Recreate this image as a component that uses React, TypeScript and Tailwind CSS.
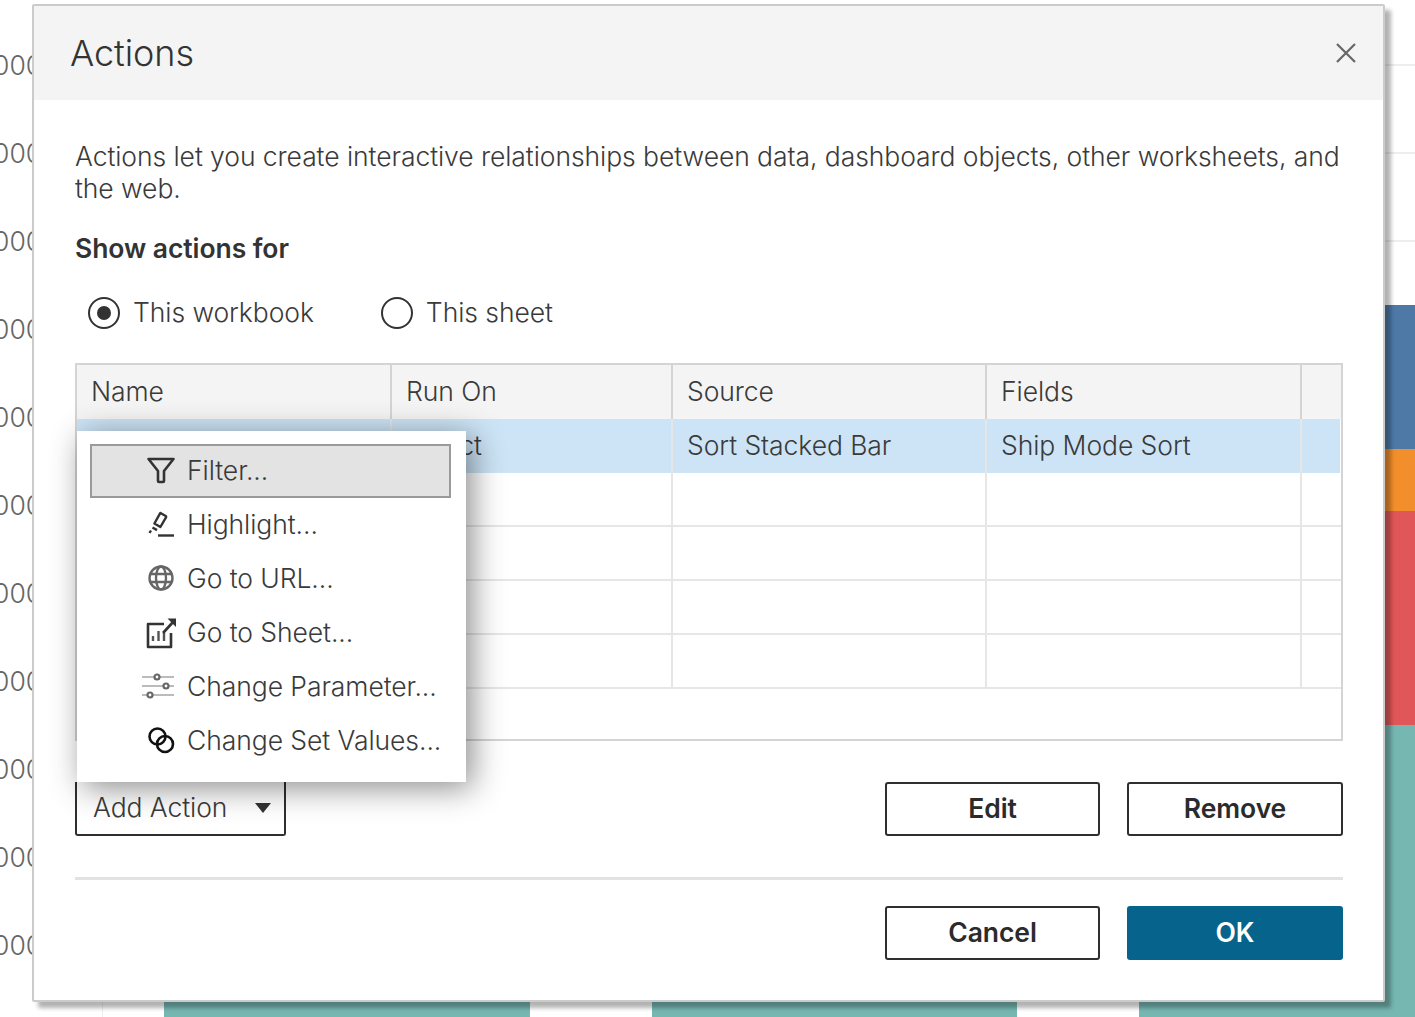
import { ReactNode } from 'react';

const icons: Record<string, ReactNode> = {
  filter: (
    <path d="M3.5 5h25l-9.5 12v10a1 1 0 0 1-1 1h-4a1 1 0 0 1-1-1V17z" fill="none" stroke="#333" strokeWidth="2.6" strokeLinejoin="round" />
  ),
  highlight: (
    <g>
      <path d="M15.5 5l5.2 3a1 1 0 0 1 .3 1.4l-5.6 9.6-6-3.5 5.4-9.7a1 1 0 0 1 .7-.8z" fill="none" stroke="#333" strokeWidth="2.4" strokeLinejoin="round" />
      <path d="M7.5 19.5l4.5 2.6M4.5 25l1.5-2.5" fill="none" stroke="#333" strokeWidth="2.4" />
      <path d="M13 27.5h16" stroke="#333" strokeWidth="2.4" />
    </g>
  ),
  globe: (
    <g fill="none" stroke="#666" strokeWidth="2.4">
      <circle cx="16" cy="16" r="11.5" />
      <ellipse cx="16" cy="16" rx="5" ry="11.5" />
      <path d="M5 12h22M5 20h22" />
    </g>
  ),
  sheet: (
    <g fill="none" stroke="#333">
      <path d="M19 8H3v23h23V17" strokeWidth="2.6" strokeLinejoin="round" />
      <path d="M8 25v-5M13.5 25V15M19 25v-8" stroke="#555" strokeWidth="2.4" />
      <path d="M18 17L29 5" strokeWidth="2.6" />
      <path d="M22.5 2.5h8.5v8.5z" fill="#333" stroke="none" />
    </g>
  ),
  parameter: (
    <g>
      <path d="M-3 7h32M-3 16h32M-3 25h32" stroke="#bbb" strokeWidth="2.2" />
      <g fill="#fff" stroke="#666" strokeWidth="2.2">
        <circle cx="12" cy="7" r="2.5" />
        <circle cx="21" cy="16" r="2.5" />
        <circle cx="5" cy="25" r="2.5" />
      </g>
    </g>
  ),
  sets: (
    <g fill="none" stroke="#111" strokeWidth="2.6">
      <circle cx="12.5" cy="12.5" r="8" />
      <circle cx="20" cy="20" r="8" />
    </g>
  ),
};

const menuItems = [
  { label: 'Filter...', icon: 'filter' },
  { label: 'Highlight...', icon: 'highlight' },
  { label: 'Go to URL...', icon: 'globe' },
  { label: 'Go to Sheet...', icon: 'sheet' },
  { label: 'Change Parameter...', icon: 'parameter' },
  { label: 'Change Set Values...', icon: 'sets' },
];

const emptyRows = [1, 2, 3, 4];
const axisTicks = [1, 2, 3, 4, 5, 6, 7, 8, 9, 10, 11];
const cols = 'grid grid-cols-[315px_281px_314px_315px_1fr]';

function Cell({ children, last }: { children?: ReactNode; last?: boolean }) {
  return (
    <div className={`flex items-center pl-[14px] whitespace-nowrap ${last ? '' : 'border-r-2 border-[#e6e6e6]'}`}>
      {children}
    </div>
  );
}

function OutlineButton({ label }: { label: string }) {
  return (
    <button className="h-[54px] border-2 border-[#2f2f2f] rounded-[3px] bg-white font-semibold text-[#2b2b2b]">
      {label}
    </button>
  );
}

function Radio({ label, checked }: { label: string; checked?: boolean }) {
  return (
    <label className="flex items-center gap-[13px]">
      <span className="w-[32px] h-[32px] rounded-full border-2 border-[#333] flex items-center justify-center">
        {checked && <span className="w-[14px] h-[14px] rounded-full bg-[#333]" />}
      </span>
      <span className="-translate-y-px">{label}</span>
    </label>
  );
}

export default function App() {
  return (
    <div className="relative w-[1415px] h-[1017px] overflow-hidden bg-white font-['Inter',sans-serif] text-[26.5px] tracking-[-0.07px] text-[#3a3a3a]">
      {/* worksheet behind the dialog */}
      <div className="absolute left-[-48px] top-[22px] flex flex-col font-light text-[#666]">
        {axisTicks.map((t) => (
          <div key={t} className="h-[88px] w-[90px] flex items-center justify-end">
            1,000
          </div>
        ))}
      </div>
      <div className="absolute left-[1385px] right-0 top-0 h-[305px] flex flex-col justify-start pt-[64px] gap-[86px]">
        <div className="h-[2px] bg-[#eeeeee]" />
        <div className="h-[2px] bg-[#eeeeee]" />
        <div className="h-[2px] bg-[#eeeeee]" />
      </div>
      <div className="absolute left-[1385px] right-0 top-[305px] bottom-0 flex flex-col">
        <div className="h-[144px] bg-[#4e79a7]" />
        <div className="h-[62px] bg-[#f28e2b]" />
        <div className="h-[214px] bg-[#e15759]" />
        <div className="flex-1 bg-[#76b7b2]" />
      </div>
      <div className="absolute left-[102px] w-px top-[990px] bottom-0 bg-[#eeeeee]" />
      <div className="absolute left-[164px] w-[366px] top-[990px] bottom-0 bg-[#76b7b2]" />
      <div className="absolute left-[652px] w-[365px] top-[990px] bottom-0 bg-[#76b7b2]" />
      <div className="absolute left-[1139px] w-[260px] top-[990px] bottom-0 bg-[#76b7b2]" />

      {/* dialog */}
      <div className="absolute left-[32px] top-[4px] w-[1353px] h-[998px] bg-white border-2 border-[#cbcbcb] rounded-[2px] shadow-[6px_6px_4px_rgba(0,0,0,0.3)] flex flex-col">
        <div className="h-[94px] bg-[#f4f4f4] flex items-center justify-between pl-[36px] pr-[27px]">
          <h1 className="text-[36px] font-light text-[#333]">Actions</h1>
          <svg width="20" height="20" viewBox="0 0 20 20">
            <path d="M1 1l18 18M19 1L1 19" stroke="#666" strokeWidth="2.2" />
          </svg>
        </div>

        <div className="flex-1 flex flex-col pl-[41px] pr-[40px] pt-[40px]">
          <p className="leading-[32px] font-light">
            Actions let you create interactive relationships between data, dashboard objects, other worksheets, and the web.
          </p>
          <h2 className="mt-[24px] leading-[40px] font-semibold text-[#333]">Show actions for</h2>
          <div className="flex gap-[67px] pl-[13px] mt-[29px] font-light leading-[32px]">
            <Radio label="This workbook" checked />
            <Radio label="This sheet" />
          </div>

          <div className="mt-[34px] h-[378px] border-2 border-[#d4d4d4] flex flex-col font-light">
            <div className={`${cols} h-[54px] bg-[#f4f4f4] [&>div]:border-[#d4d4d4]`}>
              <Cell>Name</Cell>
              <Cell>Run On</Cell>
              <Cell>Source</Cell>
              <Cell>Fields</Cell>
              <Cell last />
            </div>
            <div className={`${cols} h-[54px] mr-px bg-[#cce4f6]`}>
              <Cell>Sort</Cell>
              <Cell>Select</Cell>
              <Cell>Sort Stacked Bar</Cell>
              <Cell>Ship Mode Sort</Cell>
              <Cell last />
            </div>
            {emptyRows.map((r) => (
              <div key={r} className={`${cols} h-[54px] border-b-2 border-[#e6e6e6]`}>
                <Cell />
                <Cell />
                <Cell />
                <Cell />
                <Cell last />
              </div>
            ))}
          </div>

          <div className="mt-[41px] flex justify-between">
            <div className="h-[54px] w-[211px] border-2 border-t-0 border-[#2f2f2f] rounded-b-[3px] flex items-center justify-between pl-[16px] pr-[13px] font-light">
              Add Action
              <svg width="16" height="10" viewBox="0 0 16 10">
                <path d="M0 0h16L8 10z" fill="#333" />
              </svg>
            </div>
            <div className="grid grid-cols-[215px_216px] gap-[27px]">
              <OutlineButton label="Edit" />
              <OutlineButton label="Remove" />
            </div>
          </div>

          <div className="mt-[41px] h-[3px] bg-[#e2e2e2]" />

          <div className="mt-[26px] self-end grid grid-cols-[215px_216px] gap-[27px]">
            <OutlineButton label="Cancel" />
            <button className="h-[54px] rounded-[3px] bg-[#05638c] font-semibold text-white">OK</button>
          </div>
        </div>
      </div>

      {/* add action menu */}
      <div className="absolute left-[77px] top-[431px] w-[389px] h-[351px] bg-white shadow-[6px_6px_30px_rgba(0,0,0,0.45)] pt-[13px] pl-[13px] pr-[15px] font-light">
        {menuItems.map((item, i) => (
          <div
            key={item.label}
            className={`h-[54px] flex items-center gap-[10px] pl-[47px] whitespace-nowrap ${i === 0 ? 'bg-[#e3e3e3] border-2 border-[#9a9a9a]' : 'border-2 border-transparent'}`}
          >
            <svg width="38" height="32" viewBox="-6 1 38 32" className="shrink-0">
              {icons[item.icon]}
            </svg>
            {item.label}
          </div>
        ))}
      </div>
    </div>
  );
}
